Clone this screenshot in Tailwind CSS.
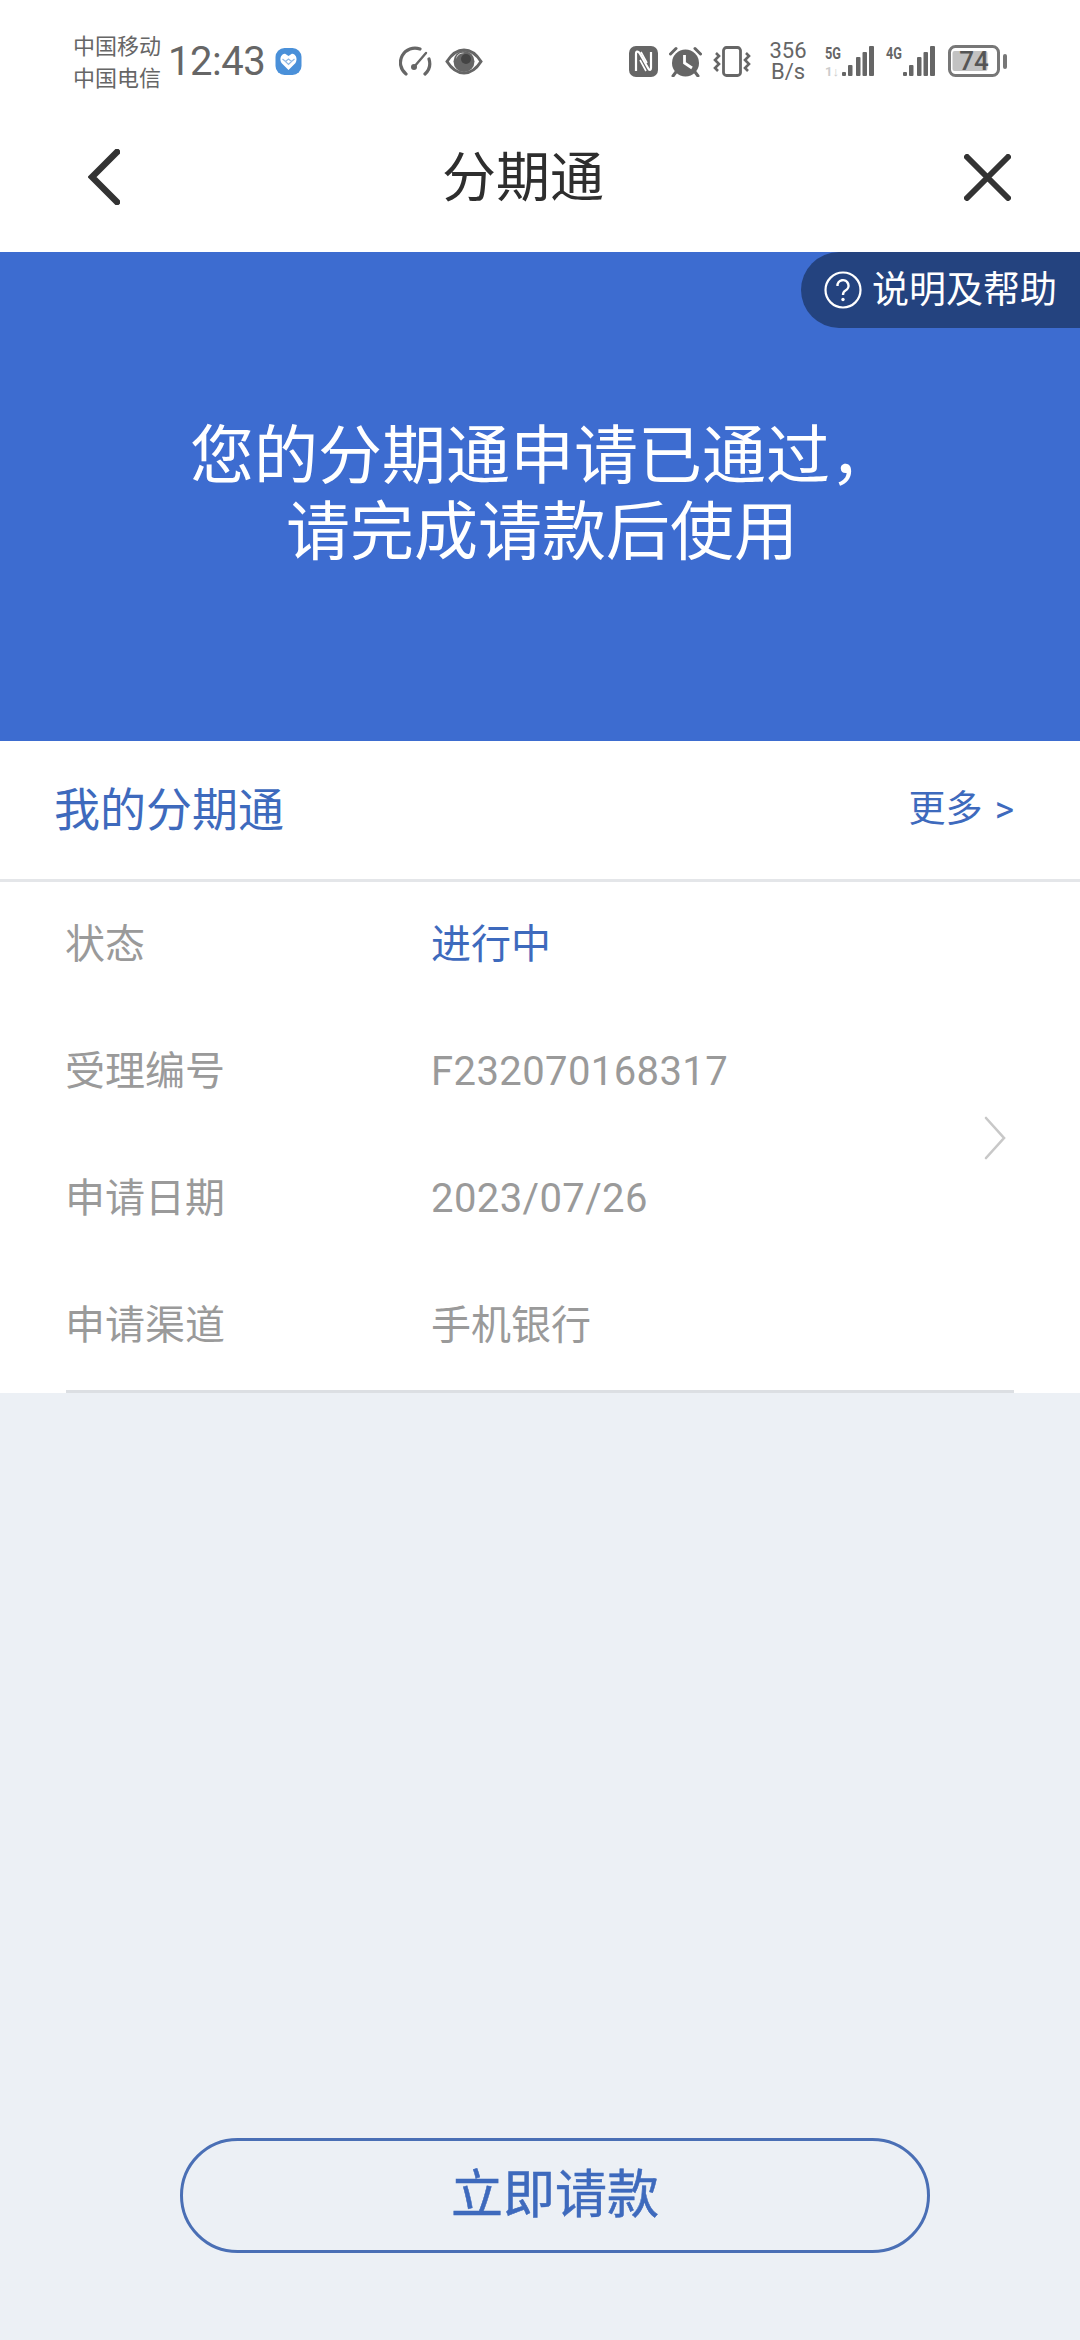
<!DOCTYPE html>
<html lang="zh-CN">
<head>
    <meta charset="UTF-8">
    <meta name="viewport" content="width=device-width, initial-scale=1.0">
    <title>分期通</title>
    <script src="https://cdn.jsdelivr.net/npm/@tailwindcss/browser@4"></script>
</head>
<body class="bg-[#ecf0f5] font-[Roboto,'Noto_Sans_CJK_SC',sans-serif]">
<div class="w-[1080px] h-[2340px] flex flex-col overflow-hidden">

    <!-- status bar -->
    <div class="h-[120px] bg-white flex items-center pl-[73px] pt-[2px] text-[#666666] shrink-0">
        <div class="w-[95px] -mt-[2px] flex flex-col text-[22px] leading-[32px] font-['Noto_Sans_CJK_SC',sans-serif]">
            <span>中国移动</span>
            <span>中国电信</span>
        </div>
        <span class="text-[40px] leading-none w-[107px] mt-[1px] tracking-[-0.5px]">12:43</span>
        <svg class="w-[27px] h-[27px]" viewBox="0 0 26 27">
            <rect width="26" height="27" rx="9" fill="#4a90d9"/>
            <path d="M13 22 L6 15 C3 10 7 5 10 6 L13 8 L16 6 C19 5 23 10 20 15 Z" fill="#fff"/>
            <path d="M7 11 L10 13.5 L13 11 L16 13.5 L19 11 M10 13.5 L13 16.5 L16 13.5" fill="none" stroke="#8fb8e4" stroke-width="1.2"/>
        </svg>
        <svg class="ml-[97px] w-[34px] h-[31px]" viewBox="0 0 34 31" fill="none" stroke="#666" stroke-width="3.2" stroke-linecap="round">
            <path d="M7 28 A14.5 14.5 0 0 1 21 3"/>
            <path d="M30 13 A14.5 14.5 0 0 1 26 28"/>
            <path d="M15 21 L27 7" stroke-width="2.4"/>
            <circle cx="15" cy="21" r="3" fill="#666" stroke="none"/>
        </svg>
        <svg class="ml-[12px] w-[38px] h-[27px]" viewBox="0 0 38 27">
            <path d="M2 13.5 C8 4 14 2 19 2 C24 2 30 4 36 13.5 C30 23 24 25 19 25 C14 25 8 23 2 13.5 Z" fill="#fff" stroke="#666" stroke-width="3"/>
            <circle cx="19" cy="13.5" r="10.5" fill="#666"/>
            <path d="M11 11 A9 9 0 0 1 20 5 A7 7 0 0 0 11 11 Z" fill="#fff"/>
            <circle cx="21" cy="11" r="5" fill="#444"/>
        </svg>

        <svg class="ml-[146px] w-[29px] h-[31px]" viewBox="0 0 29 31">
            <rect width="29" height="31" rx="7" fill="#666"/>
            <path d="M7 25 V8 C7 5 9 5 10.5 7 L19 22 C20.5 25 22 24 22 22 V6" fill="none" stroke="#fff" stroke-width="2.2"/>
            <path d="M11 14 L17 25 M12 6 L18 17" fill="none" stroke="#fff" stroke-width="1.6"/>
        </svg>
        <svg class="ml-[11px] w-[33px] h-[31px]" viewBox="0 0 33 31">
            <circle cx="16.5" cy="17" r="13.5" fill="#666"/>
            <path d="M15.5 9 V17 L23 22" fill="none" stroke="#fff" stroke-width="2.8"/>
            <path d="M1.5 8 L7 2.5 M26 2.5 L31.5 8" stroke="#666" stroke-width="3" stroke-linecap="round"/>
            <path d="M7 26 L4 30 M26 26 L29 30" stroke="#666" stroke-width="3" stroke-linecap="round"/>
        </svg>
        <svg class="ml-[11px] w-[38px] h-[31px]" viewBox="0 0 38 31" fill="none" stroke="#666">
            <rect x="10.5" y="1.5" width="17" height="28" rx="3" stroke-width="2.8"/>
            <path d="M3 7 L6 10 L2 14 L6 18 L2 22 L5 25" stroke-width="2.6"/>
            <path d="M33 7 L36 10 L32 14 L36 18 L32 22 L35 25" stroke-width="2.6"/>
        </svg>
        <div class="ml-[17px] w-[40px] flex flex-col items-center text-[22px] leading-[21px] text-[#666666]">
            <span>356</span>
            <span>B/s</span>
        </div>
        <svg class="ml-[17px] w-[49px] h-[32px] overflow-visible" viewBox="0 0 49 32">
            <text x="0" y="14" font-size="17" font-weight="700" fill="#666" font-family="Roboto" textLength="16" lengthAdjust="spacingAndGlyphs">5G</text>
            <text x="0" y="31" font-size="13" font-weight="700" fill="#ccc" font-family="Roboto" textLength="14" lengthAdjust="spacingAndGlyphs">1↓</text>
            <rect x="17" y="27" width="4" height="4" rx="1" fill="#666"/>
            <rect x="23" y="20" width="4.5" height="11" rx="1" fill="#666"/>
            <rect x="31" y="12" width="4.5" height="19" rx="1" fill="#666"/>
            <rect x="37.5" y="7" width="4.5" height="24" rx="1" fill="#666"/>
            <rect x="44" y="1" width="5" height="30" rx="1" fill="#666"/>
        </svg>
        <svg class="ml-[12px] w-[49px] h-[32px] overflow-visible" viewBox="0 0 49 32">
            <text x="0" y="14" font-size="17" font-weight="700" fill="#666" font-family="Roboto" textLength="16" lengthAdjust="spacingAndGlyphs">4G</text>
            <rect x="17" y="27" width="4" height="4" rx="1" fill="#666"/>
            <rect x="23" y="20" width="4.5" height="11" rx="1" fill="#666"/>
            <rect x="31" y="12" width="4.5" height="19" rx="1" fill="#666"/>
            <rect x="37.5" y="7" width="4.5" height="24" rx="1" fill="#666"/>
            <rect x="44" y="1" width="5" height="30" rx="1" fill="#666"/>
        </svg>
        <svg class="ml-[13px] w-[59px] h-[32px]" viewBox="0 0 59 32">
            <rect x="1.5" y="1.5" width="49" height="29" rx="6" fill="none" stroke="#777" stroke-width="3"/>
            <rect x="4.5" y="6" width="35" height="20" rx="2" fill="#c2c2c2"/>
            <text x="26" y="25" text-anchor="middle" font-size="26" font-weight="500" fill="#555" font-family="Roboto">74</text>
            <rect x="55" y="9" width="4" height="15" rx="2" fill="#777"/>
        </svg>
    </div>

    <!-- nav -->
    <div class="h-[132px] bg-white flex items-center pl-[88px] pr-[69px] pb-[18px] shrink-0">
        <svg class="w-[32px] h-[56px]" viewBox="0 0 32 56" fill="none" stroke="#333" stroke-width="6.5" stroke-linecap="round">
            <path d="M29 3 L4 28 L29 53"/>
        </svg>
        <h1 class="ml-[322px] mt-[3px] text-[54px] leading-none text-[#2e2e2e] font-normal">分期通</h1>
        <svg class="ml-auto w-[47px] h-[47px]" viewBox="0 0 47 47" fill="none" stroke="#333" stroke-width="6" stroke-linecap="round">
            <path d="M3 3 L44 44 M44 3 L3 44"/>
        </svg>
    </div>

    <!-- banner -->
    <div class="relative h-[489px] bg-[#3d6cd0] pt-[167px] pl-[4px] text-center text-white text-[64px] leading-[76px] shrink-0">
        <p>您的分期通申请已通过，</p>
        <p>请完成请款后使用</p>
        <div class="absolute top-0 right-0 w-[279px] h-[76px] bg-[#24437f] rounded-l-[38px] flex items-center pl-[23px] text-[37px] leading-none">
            <svg class="w-[38px] h-[38px] mr-[10px]" viewBox="0 0 38 38" fill="none" stroke="#fff">
                <circle cx="19" cy="19" r="17.5" stroke-width="2.2"/>
                <path d="M13.5 15 A5.5 5.5 0 1 1 21.5 19.5 C19.5 20.5 19 21.5 19 24" stroke-width="2.4"/>
                <circle cx="19" cy="28.5" r="1.7" fill="#fff" stroke="none"/>
            </svg>
            <span>说明及帮助</span>
        </div>
    </div>

    <!-- my list -->
    <div class="bg-white shrink-0">
        <div class="h-[141px] flex items-center justify-between pl-[54px] pr-[66px] border-b-[3px] border-[#e4e6e9] text-[#3e6abd]">
            <span class="text-[46px]">我的分期通</span>
            <span class="text-[37px]"><span class="mr-[3px]">更多</span> &gt;</span>
        </div>
        <div class="flex items-center pl-[65px] pr-[73px]">
            <div class="flex-1 text-[40px] text-[#9a9a9a]">
                <div class="h-[126.75px] flex items-center">
                    <span class="w-[366px]">状态</span>
                    <span class="text-[#3e6abd]">进行中</span>
                </div>
                <div class="h-[126.75px] flex items-center">
                    <span class="w-[366px]">受理编号</span>
                    <span class="tracking-[0.4px]">F232070168317</span>
                </div>
                <div class="h-[126.75px] flex items-center">
                    <span class="w-[366px]">申请日期</span>
                    <span class="tracking-[0.4px]">2023/07/26</span>
                </div>
                <div class="h-[126.75px] flex items-center">
                    <span class="w-[366px]">申请渠道</span>
                    <span>手机银行</span>
                </div>
            </div>
            <svg class="w-[24px] h-[44px] mt-[4px]" viewBox="0 0 24 44" fill="none" stroke="#c8c8c8" stroke-width="2.6" stroke-linecap="round">
                <path d="M3 2 L21 22 L3 42"/>
            </svg>
        </div>
        <div class="pt-[1px] px-[66px]">
            <div class="h-[3px] bg-[#dcdfe3]"></div>
        </div>
    </div>

    <!-- bottom action -->
    <div class="flex-1 flex items-end pb-[87px] pl-[180px]">
        <button class="w-[750px] h-[115px] rounded-full border-[3px] border-[#4a6fb5] text-[52px] [-webkit-text-stroke:0.5px] text-[#3e6abd]">立即请款</button>
    </div>
</div>
</body>
</html>
